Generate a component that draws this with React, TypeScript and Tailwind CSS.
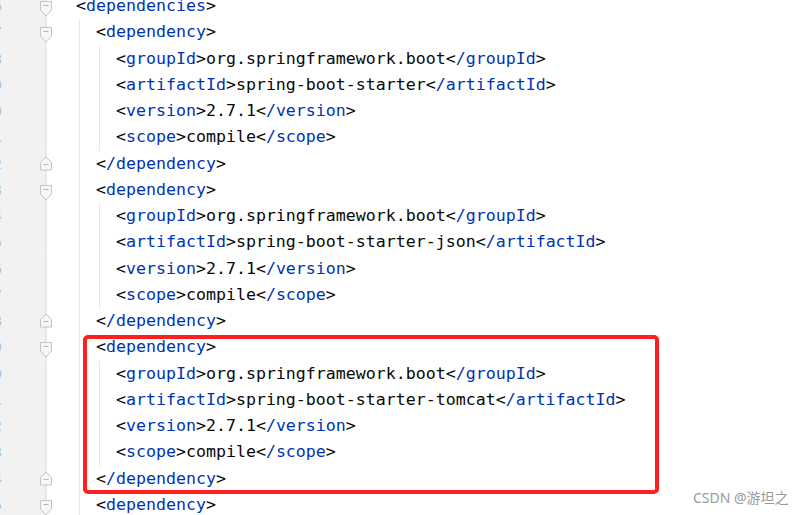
import React from "react";

type Tok = { t: string; c: "b" | "n" | "x" };

const open = (name: string): Tok[] => [
  { t: "<", c: "b" },
  { t: name, c: "n" },
  { t: ">", c: "b" },
];
const close = (name: string): Tok[] => [
  { t: "<", c: "b" },
  { t: "/" + name, c: "n" },
  { t: ">", c: "b" },
];
const el = (name: string, val: string): Tok[] => [
  ...open(name),
  { t: val, c: "x" },
  ...close(name),
];

const deps: [string, string, string, string][] = [
  ["org.springframework.boot", "spring-boot-starter", "2.7.1", "compile"],
  ["org.springframework.boot", "spring-boot-starter-json", "2.7.1", "compile"],
  ["org.springframework.boot", "spring-boot-starter-tomcat", "2.7.1", "compile"],
];

const colorCls: Record<string, string> = {
  b: "text-[#080808]",
  n: "text-[#0033b3]",
  x: "text-[#080808]",
};

function CodeLine({ toks }: { toks: Tok[] }) {
  return (
    <div className="h-[26.26px] leading-[26.26px] whitespace-pre">
      {toks.map((k, i) => (
        <span key={i} className={colorCls[k.c]}>
          {k.t}
        </span>
      ))}
    </div>
  );
}

function Marker({ kind }: { kind?: "open" | "close" }) {
  return (
    <svg width="12" height="26.26" viewBox="0 0 12 26.26" className="block shrink-0">
      <line x1="6" y1="0" x2="6" y2="26.26" stroke="#d6d6d6" strokeWidth="1" />
      {kind === "open" && (
        <g>
          <path d="M0.5 8.5 H11.5 V17 L6 23 L0.5 17 Z" fill="#f7f7f7" stroke="#c4c4c4" strokeWidth="1" />
          <line x1="3.5" y1="12.5" x2="8.5" y2="12.5" stroke="#b4b4b4" strokeWidth="1" />
        </g>
      )}
      {kind === "close" && (
        <g>
          <path d="M6 6 L11.5 11.5 V19 H0.5 V11.5 Z" fill="#f7f7f7" stroke="#c4c4c4" strokeWidth="1" />
          <line x1="3.5" y1="13.5" x2="8.5" y2="13.5" stroke="#b4b4b4" strokeWidth="1" />
        </g>
      )}
    </svg>
  );
}

export default function App() {
  const gutterFolds: (("open" | "close") | undefined)[] = [];
  gutterFolds.push("open");
  deps.forEach(() => {
    gutterFolds.push("open", undefined, undefined, undefined, undefined, "close");
  });
  gutterFolds.push("open");

  return (
    <div
      className="relative w-[807px] h-[515px] overflow-hidden bg-white"
      style={{ fontFamily: '"DejaVu Sans Mono", "Liberation Mono", monospace' }}
    >
      <div className="flex -mt-[6.8px] text-[16.6px]">
        {/* gutter */}
        <div className="w-[46px] shrink-0 bg-[#f2f2f2] flex flex-col">
          {gutterFolds.map((f, i) => (
            <div key={i} className="h-[26.26px] flex items-stretch justify-between">
              <div className="w-[2px] overflow-hidden flex justify-end">
                <span className="text-[14px] leading-[26.26px] text-[#a9c0de]">{26 + i}</span>
              </div>
              <div className="-mr-[6px]">
                <Marker kind={f} />
              </div>
            </div>
          ))}
        </div>
        {/* code */}
        <div className="flex-1 pl-[30px]">
          <CodeLine toks={open("dependencies")} />
          <div className="ml-[3px] border-l border-[#e6e6e6] pl-[16px]">
            {deps.map((d, i) => (
              <div key={i}>
                <CodeLine toks={open("dependency")} />
                <div className="ml-[3px] border-l border-[#e6e6e6] pl-[16px]">
                  <CodeLine toks={el("groupId", d[0])} />
                  <CodeLine toks={el("artifactId", d[1])} />
                  <CodeLine toks={el("version", d[2])} />
                  <CodeLine toks={el("scope", d[3])} />
                </div>
                <CodeLine toks={close("dependency")} />
              </div>
            ))}
            <CodeLine toks={open("dependency")} />
          </div>
        </div>
      </div>

      {/* red highlight box */}
      <div className="absolute left-[83px] top-[335px] w-[576px] h-[159px] border-[4px] border-[#ff1f1f] rounded-[5px]" />

      {/* watermark */}
      <div
        className="absolute left-[693px] top-[488px] text-[14px] leading-[20px] text-[#9a9a9a] whitespace-nowrap"
        style={{ fontFamily: '"Noto Sans", "Noto Sans CJK SC", sans-serif' }}
      >
        CSDN @游坦之
      </div>
    </div>
  );
}
